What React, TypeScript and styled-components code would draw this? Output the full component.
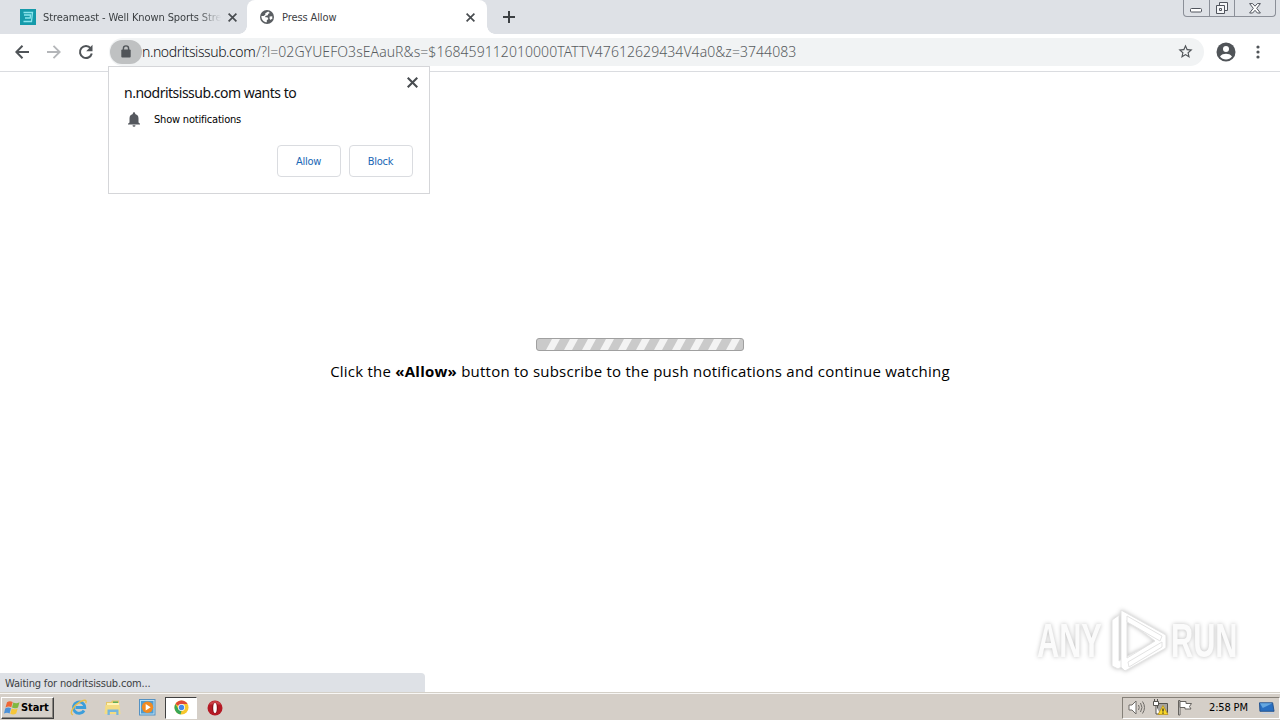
import type { ReactNode } from 'react';
import styled, { createGlobalStyle } from 'styled-components';

const GlobalStyle = createGlobalStyle`
    * {
        box-sizing: border-box;
    }

    body {
        margin: 0;
        overflow: hidden;
        background-color: #ffffff;
        font-family: "DejaVu Sans Condensed", "Noto Sans", sans-serif;
        font-size: 11px;
    }

    svg {
        display: block;
        flex-shrink: 0;
    }
`;

interface ITab {
    title: string;
    active?: boolean;
    spacing: string;
    icon: ReactNode;
}

const CloseIcon = ({ size = 9 }: { size?: number }) => (
    <svg width={size} height={size} viewBox="0 0 9 9" stroke="#484c50" strokeWidth="1.7">
        <path d="M.6 .6 8.4 8.4M8.4 .6 .6 8.4" />
    </svg>
);

const Tab = ({ title, active, spacing, icon }: ITab) => (
    <TabBox $active={active}>
        {icon}
        <TabTitle $active={active} $spacing={spacing}>{title}</TabTitle>
        <CloseIcon />
    </TabBox>
);

const StreamIcon = () => (
    <svg width="16" height="16" viewBox="0 0 16 16">
        <path fill="#159aaa" d="M0 0h16v16H0z" />
        <path d="M3.500 3.500h9l-1 9h-8M4 6h6.500l-.3 3H5" fill="none" stroke="#8be5ed" strokeWidth="1.300" />
    </svg>
);

const GlobeIcon = () => (
    <svg width="16" height="16" viewBox="0 0 16 16">
        <circle cx="8" cy="8" r="7" fill="#5a5e62" />
        <path
            d="M9.200 2.600 6.300 4.200v1.600L4.600 7H2.400c-.2 3.700 2.500 6.200 5.400 6.300v-2l1.600-1.400-1-1.700H6.300V6.900l2.500-.7.5-1.400 1.600-.7z"
            fill="#ffffff"
        />
        <path d="M10.600 7.600l2.700-.3v2l-1.600 1.800-1.100-1.400z" fill="#ffffff" />
    </svg>
);

const WindowControls = () => (
    <Controls>
        <Control $width={25}>
            <svg width="13" height="5"><rect x=".5" y=".5" width="11" height="3.500" rx="1" fill="#fff" stroke="#50545d" /></svg>
        </Control>
        <Control $width={25}>
            <svg width="14" height="14" fill="#f5f6f8" stroke="#50545d">
                <path d="M4.500 1.500h8v8h-8z" />
                <path d="M1.500 4.500h8v8h-8z" />
                <path d="M4.500 7.500h2v2h-2z" />
            </svg>
        </Control>
        <Control $width={41}>
            <svg width="12" height="11" viewBox="0 0 12 11">
                <path d="M.6 .6h3L6 3.200 8.400 .6h3L7.700 5.300l3.700 4.700h-3L6 7.300 3.600 10h-3l3.700-4.700z" fill="#fff" stroke="#50545d" />
            </svg>
        </Control>
    </Controls>
);

const BackIcon = ({ color }: { color: string }) => (
    <svg width="14" height="14" viewBox="0 0 14 14" fill="none" stroke={color} strokeWidth="2">
        <path d="M14 7H1.500M7.500 .8 1.300 7l6.200 6.200" />
    </svg>
);

const ForwardIcon = ({ color }: { color: string }) => (
    <svg width="14" height="14" viewBox="0 0 14 14" fill="none" stroke={color} strokeWidth="1.800">
        <path d="M0 7h12.500M6.500 .8 12.700 7l-6.200 6.200" />
    </svg>
);

const ReloadIcon = () => (
    <svg width="16" height="16" viewBox="0 0 16 16">
        <path d="M12.700 4.300A6 6 0 1 0 13.800 9.500" fill="none" stroke="#505458" strokeWidth="2" />
        <path d="M14.500 .8v6.400H8.200z" fill="#505458" />
    </svg>
);

const Toolbar = () => (
    <ToolbarRow>
        <NavIcons>
            <BackIcon color="#505458" />
            <ForwardIcon color="#b4b6b9" />
            <ReloadIcon />
        </NavIcons>
        <AddressBar>
            <LockChip>
                <svg width="10" height="13" viewBox="0 0 10 13">
                    <path d="M2.400 5V3.500a2.600 2.600 0 0 1 5.200 0V5" fill="none" stroke="#505458" strokeWidth="1.400" />
                    <rect y="4.600" x=".3" width="9.400" height="7.800" rx="1" fill="#505458" />
                </svg>
            </LockChip>
            <Host>n.nodritsissub.com</Host>
            <Query>/?l=02GYUEFO3sEAauR&amp;s=$168459112010000TATTV47612629434V4a0&amp;z=3744083</Query>
            <svg width="17" height="17" viewBox="0 0 24 24" fill="#505458">
                <path d="M22 9.240l-7.190-.62L12 2 9.190 8.630 2 9.240l5.460 4.730L5.820 21 12 17.270 18.180 21l-1.630-7.030zM12 15.400l-3.760 2.270 1-4.280-3.320-2.880 4.380-.38L12 6.100l1.710 4.040 4.380.38-3.320 2.880 1 4.280z" />
            </svg>
        </AddressBar>
        <svg width="20" height="20" viewBox="0 0 20 20">
            <circle cx="10" cy="10" r="9.500" fill="#505458" />
            <circle cx="10" cy="6.900" r="3" fill="#fff" />
            <path d="M4 14.400c1.200-2 4-2.700 6-2.700s4.800.7 6 2.700c-1.400 1.900-3.600 3-6 3s-4.600-1.100-6-3z" fill="#fff" />
        </svg>
        <svg width="4" height="14" fill="#505458">
            <circle cx="2" cy="2" r="1.600" />
            <circle cx="2" cy="7" r="1.600" />
            <circle cx="2" cy="12" r="1.600" />
        </svg>
    </ToolbarRow>
);

const PermissionPrompt = () => (
    <Prompt>
        <PromptHeader>
            <PromptTitle>n.nodritsissub.com wants to</PromptTitle>
            <CloseIcon size={11} />
        </PromptHeader>
        <PromptRow>
            <svg width="14" height="16" viewBox="0 0 14 16" fill="#55585e">
                <path d="M7 1.300a1.200 1.200 0 0 1 1.200 1.200V3c2.200.6 3.300 2.200 3.300 4.400v4l1.500 1.400v.8H1v-.8l1.500-1.400v-4C2.500 5.200 3.600 3.600 5.800 3v-.5A1.200 1.200 0 0 1 7 1.300zM5.500 14.300h3a1.500 1.500 0 0 1-3 0z" />
            </svg>
            <PromptText>Show notifications</PromptText>
        </PromptRow>
        <PromptActions>
            <PromptButton>Allow</PromptButton>
            <PromptButton>Block</PromptButton>
        </PromptActions>
    </Prompt>
);

const Watermark = () => (
    <WatermarkBox>
        <WatermarkText>ANY</WatermarkText>
        <svg width="58" height="64" viewBox="0 0 58 64" fill="#fff" stroke="#e3e3e3" strokeWidth="1" strokeLinejoin="round">
            <path d="M3 11 10 6v46l20-11 3 5L9 60l-6-3z" />
            <path d="M12 1 57 26v13L16 62l-4-4V1zm6 10v38l28-17z" fillRule="evenodd" />
            <path d="M18 7 53 27l-2 5L18 13zM19 53l34-20v5L20 58z" />
        </svg>
        <WatermarkText>RUN</WatermarkText>
    </WatermarkBox>
);

const WindowsLogo = () => (
    <svg width="17" height="16" viewBox="0 0 17 16">
        <path d="M3 2.300c2-1.500 3.800-1.300 5.700-.3L7.300 7.300c-1.700-1-3.700-1-5.800.2z" fill="#ee6635" />
        <path d="M9.300 2.400c1.900 1 4 1 6.200-.2l-1.500 5.200c-2 1.200-4 1.200-6 .2z" fill="#80b840" />
        <path d="M1.200 8.400c2-1.300 4-1.200 5.800-.2l-1.400 5.200c-1.800-1-3.600-1-5.600.2z" fill="#4c91d8" />
        <path d="M7.700 8.600c1.900 1 3.900 1 6-.2l-1.500 5.200c-2 1.200-4 1.200-5.900.2z" fill="#f7c638" />
    </svg>
);

const ExplorerIcon = () => (
    <svg width="18" height="17" viewBox="0 0 18 17" fill="none">
        <path d="M14 11.500A5.700 5.700 0 1 1 14.800 8.500H5.500" stroke="#3c9edb" strokeWidth="2.800" />
        <path d="M3 15.700C-1.500 15 3.500 6.800 9.500 3.200c4.800-3 7.800-2.500 6.200.9" stroke="#e9bf48" strokeWidth="1.400" />
    </svg>
);

const FolderIcon = () => (
    <svg width="18" height="17" viewBox="0 0 18 17">
        <path d="M2 3h5l1-1.500h7V15H2z" fill="#e6c768" />
        <path d="M3 4h12v5H3z" fill="#fff4b5" />
        <path d="M9 2.500h5v1.500H9z" fill="#63ad58" />
        <path d="M1.500 6h14l1 9h-16z" fill="#f4dc82" />
        <path d="M3.500 16v-5.500h11V16h-2.200v-3H5.800v3z" fill="#75b6de" />
    </svg>
);

const PlayerIcon = () => (
    <svg width="17" height="17" viewBox="0 0 17 17">
        <rect x=".5" y=".5" width="15.500" height="15.500" fill="#b9dff5" stroke="#5592c3" />
        <path d="M2 2h12.500v12.500H2z" fill="#4f9bd0" />
        <circle cx="8.500" cy="8.300" r="5.700" fill="#f18a21" />
        <path d="m6.700 5 5 3.300-5 3.300z" fill="#fff" />
    </svg>
);

const ChromeIcon = () => (
    <svg width="15" height="15" viewBox="0 0 16 16">
        <circle cx="8" cy="8" r="7.500" fill="#f7c72d" />
        <path d="M8 8 1.500 4.250A7.500 7.500 0 0 1 14.500 4.250H8z" fill="#df4937" />
        <path d="M1.500 4.250 4.900 10 8 11.500l-1 3.900A7.500 7.500 0 0 1 1.500 4.250z" fill="#38a657" />
        <circle cx="8" cy="8" r="3.700" fill="#fff" />
        <circle cx="8" cy="8" r="2.900" fill="#4589ea" />
    </svg>
);

const OperaIcon = () => (
    <svg width="16" height="16" viewBox="0 0 16 16">
        <circle cx="8" cy="8" r="7.500" fill="#b51924" />
        <path d="M2 4.500C4-.3 12-.3 14 4.500z" fill="#d65a5e" opacity=".6" />
        <ellipse cx="8" cy="8" rx="2.900" ry="5.200" fill="#811018" />
        <ellipse cx="8" cy="8" rx="1.800" ry="5" fill="#fff" />
    </svg>
);

const SystemTray = () => (
    <Tray>
        <svg width="18" height="17" viewBox="0 0 18 17" stroke="#6e6b67" fill="none">
            <path d="M1 6h3l4-4v13l-4-4H1z" fill="#fff" />
            <path d="M10.500 6q1.500 2.500 0 5M12.500 4q3 4.500 0 9M14.500 2.500q4 6 0 12" />
        </svg>
        <svg width="18" height="17" viewBox="0 0 18 17">
            <path d="M5.500 4.500h10v9h-10z" fill="#a6a49f" stroke="#55534e" />
            <path d="M1.500 2.500h5v4h-5zM2.500 0v3M5.500 0v3M4 6.500V15h4" fill="#fff" stroke="#55534e" />
            <path d="m11 6.500 5 9H6z" fill="#f8d729" stroke="#b88c12" strokeWidth=".7" />
            <path d="M11 9.500v3M11 13.500v1.200" stroke="#222" strokeWidth="1.200" />
        </svg>
        <svg width="18" height="17" viewBox="0 0 18 17" fill="#fff" stroke="#66635f">
            <path d="M2.500 1.500h1.500V16H2.500z" />
            <path d="M4 2.500h6v2h5.500l-2 3 1.500 2.500H9V8.500H4z" />
        </svg>
        <Clock>2:58 PM</Clock>
        <svg width="16" height="14" viewBox="0 0 17 14">
            <path d="M.5 1.500h14l1.500 9H1z" fill="#296fc1" stroke="#22518d" />
            <path d="M1 2h13l-10 5z" fill="#65a7e0" />
            <path d="M2 12h14v1.500H4z" fill="#c1cfe2" />
        </svg>
    </Tray>
);

const App = () => (
    <>
        <GlobalStyle />
        <Screen>
            <TabStrip>
                <Tab title="Streameast - Well Known Sports Stre" spacing="-0.1px" icon={<StreamIcon />} />
                <Tab title="Press Allow" active spacing="-0.1px" icon={<GlobeIcon />} />
                <NewTab>
                    <svg width="12" height="12" stroke="#3c4043" strokeWidth="2"><path d="M6 0v12M0 6h12" /></svg>
                </NewTab>
                <WindowControls />
            </TabStrip>
            <Toolbar />
            <Page>
                <Progress>
                    <svg width="206" height="11">
                        {Array.from({ length: 11 }, (_, i) => (
                            <path key={i} d={`M${9 + i * 18} 11l6-11h8l-6 11z`} fill="#f3f3f3" />
                        ))}
                    </svg>
                </Progress>
                <Message>
                    Click the <b>«Allow»</b> button to subscribe to the push notifications and continue watching
                </Message>
                <PermissionPrompt />
                <Watermark />
                <Status>Waiting for nodritsissub.com...</Status>
            </Page>
            <Taskbar>
                <StartButton>
                    <WindowsLogo />
                    Start
                </StartButton>
                <QuickLaunch>
                    <TaskItem><ExplorerIcon /></TaskItem>
                    <TaskItem><FolderIcon /></TaskItem>
                    <TaskItem><PlayerIcon /></TaskItem>
                    <TaskItem $pressed><ChromeIcon /></TaskItem>
                    <TaskItem><OperaIcon /></TaskItem>
                </QuickLaunch>
                <SystemTray />
            </Taskbar>
        </Screen>
    </>
);

const Screen = styled.div`
    width: 1280px;
    height: 720px;
    overflow: hidden;

    display: flex;
    flex-direction: column;
`;

const TabStrip = styled.div`
    height: 34px;
    padding-left: 7px;
    background-color: #dee1e6;

    display: flex;
    flex-shrink: 0;
`;

const TabBox = styled.div<{ $active?: boolean }>`
    position: relative;
    width: 240px;
    height: 34px;
    padding: ${({ $active }) => ($active ? '0 12px' : '0 11px 0 13px')};
    border-radius: 8px 8px 0 0;
    background-color: ${({ $active }) => ($active ? '#ffffff' : 'transparent')};

    display: flex;
    align-items: center;
    gap: 7px;

    &::before,
    &::after {
        content: '';
        display: ${({ $active }) => ($active ? 'block' : 'none')};
        position: absolute;
        bottom: 0;
        width: 8px;
        height: 8px;
    }

    &::before {
        left: -8px;
        background: radial-gradient(circle at 0 0, #dee1e6 7.5px, #ffffff 8px);
    }

    &::after {
        right: -8px;
        background: radial-gradient(circle at 100% 0, #dee1e6 7.5px, #ffffff 8px);
    }
`;

const TabTitle = styled.span<{ $active?: boolean; $spacing: string }>`
    flex: 1;
    white-space: nowrap;
    color: #3c4043;
    letter-spacing: ${({ $spacing }) => $spacing};
    mask-image: ${({ $active }) => ($active ? 'none' : 'linear-gradient(90deg, #000 155px, transparent 178px)')};
`;

const NewTab = styled.div`
    width: 44px;
    padding-top: 11px;

    display: flex;
    justify-content: center;
`;

const Controls = styled.div`
    height: 17px;
    margin-left: auto;
    margin-right: 4px;
    border: 1px solid #8b8f98;
    border-top: none;
    border-radius: 0 0 4px 4px;

    display: flex;
`;

const Control = styled.div<{ $width: number }>`
    width: ${({ $width }) => $width}px;

    display: flex;
    justify-content: center;
    align-items: center;

    & + & {
        border-left: 1px solid #8b8f98;
    }

    &:first-child {
        align-items: flex-end;
        padding-bottom: 3px;
    }
`;

const ToolbarRow = styled.div`
    height: 38px;
    padding: 0 20px 2px 15px;
    border-bottom: 1px solid #dadce0;

    display: flex;
    align-items: center;
    flex-shrink: 0;

    & > svg:last-child {
        margin-left: 20px;
    }
`;

const NavIcons = styled.div`
    width: 94px;

    display: flex;
    align-items: center;
    gap: 17.5px;
`;

const AddressBar = styled.div`
    width: 1095px;
    height: 28px;
    padding: 0 10px 0 1px;
    margin-right: 12px;
    border-radius: 14px;
    background-color: #f1f3f4;
    font-family: "Noto Sans", sans-serif;
    font-size: 14px;
    font-weight: 300;

    display: flex;
    align-items: center;
`;

const LockChip = styled.div`
    width: 32px;
    height: 24px;
    border-radius: 12px;
    background-color: #bfc1c2;

    display: flex;
    justify-content: center;
    align-items: center;
`;

const Host = styled.span`
    width: 114px;
    white-space: nowrap;
    color: #101114;
    letter-spacing: -0.42px;
`;

const Query = styled.span`
    flex: 1;
    white-space: nowrap;
    color: #585c60;
    letter-spacing: 0.06px;
`;

const Page = styled.main`
    position: relative;
    height: 620px;
    padding-top: 266px;

    display: flex;
    flex-direction: column;
    align-items: center;
`;

const Progress = styled.div`
    width: 208px;
    height: 13px;
    border: 1px solid #a0a0a0;
    border-radius: 3px;
    background-color: #cacaca;
    overflow: hidden;
`;

const Message = styled.p`
    margin: 8px 0 0;
    white-space: nowrap;
    color: #000000;
    font-family: "Open Sans", sans-serif;
    font-size: 15px;
    line-height: 24px;
    letter-spacing: 0.23px;
`;

const Prompt = styled.div`
    position: absolute;
    left: 108px;
    top: -6px;
    width: 322px;
    height: 128px;
    padding: 10px 16px 16px 15px;
    border: 1px solid #d5d6d9;
    background-color: #ffffff;

    display: flex;
    flex-direction: column;
`;

const PromptHeader = styled.div`
    height: 33px;

    display: flex;
    justify-content: space-between;

    & > svg {
        margin-right: -5px;
    }
`;

const PromptTitle = styled.div`
    padding-top: 6px;
    color: #101114;
    font-family: "Noto Sans", sans-serif;
    font-size: 14px;
    line-height: 20px;
    letter-spacing: -0.5px;
`;

const PromptRow = styled.div`
    height: 18px;
    padding-left: 3px;

    display: flex;
    align-items: center;
    gap: 13px;
`;

const PromptText = styled.span`
    color: #000000;
    letter-spacing: -0.2px;
`;

const PromptActions = styled.div`
    margin-top: auto;

    display: flex;
    justify-content: flex-end;
    gap: 8px;
`;

const PromptButton = styled.button`
    width: 64px;
    height: 32px;
    padding: 0 1px 0 0;
    border: 1px solid #dadce0;
    border-radius: 4px;
    background-color: #ffffff;
    color: #1967b5;
    font-family: inherit;
    font-size: 11px;
    letter-spacing: -0.3px;
`;

const WatermarkBox = styled.div`
    position: absolute;
    left: 1037px;
    top: 537px;
    filter: drop-shadow(0 0 2px rgba(0, 0, 0, 0.25));

    display: flex;
    align-items: center;
    gap: 4px;
`;

const WatermarkText = styled.span`
    width: 68px;
    color: #fbfbfb;
    font-family: "Liberation Sans", sans-serif;
    font-size: 48px;
    font-weight: bold;
    line-height: 60px;
    white-space: nowrap;
    transform: scaleX(0.64);
    transform-origin: 0 50%;
`;

const Status = styled.div`
    position: absolute;
    left: 0;
    bottom: 0;
    width: 425px;
    height: 19px;
    padding-left: 5px;
    border-radius: 0 4px 0 0;
    background-color: #dee1e6;
    color: #3c4043;
    line-height: 21px;
    letter-spacing: -0.17px;
`;

const Taskbar = styled.div`
    height: 28px;
    padding: 3px 0 1px 1px;
    border-top: 1px solid #d4d0c8;
    background-color: #d5cfc8;
    box-shadow: inset 0 1px 0 #f8f7f5;

    display: flex;
    align-items: center;
`;

const StartButton = styled.button`
    width: 53px;
    height: 22px;
    padding: 0 0 0 2px;
    border: 1px solid;
    border-color: #ffffff #404040 #404040 #ffffff;
    box-shadow: inset -1px -1px 0 #8a8680;
    background-color: #d5cfc8;
    color: #000000;
    font-family: "DejaVu Sans Condensed", sans-serif;
    font-size: 11px;
    font-weight: bold;
    letter-spacing: -0.1px;

    display: flex;
    align-items: center;
`;

const QuickLaunch = styled.div`
    margin-left: 9px;

    display: flex;
    gap: 2px;
`;

const TaskItem = styled.div<{ $pressed?: boolean }>`
    width: 32px;
    height: 22px;
    border: 1px solid;
    border-color: ${({ $pressed }) => ($pressed ? '#404040 #ffffff #ffffff #404040' : 'transparent')};
    background-color: ${({ $pressed }) => ($pressed ? '#ffffff' : 'transparent')};

    display: flex;
    justify-content: center;
    align-items: center;
`;

const Tray = styled.div`
    width: 158px;
    height: 22px;
    margin-left: auto;
    padding-left: 5px;
    border: 1px solid;
    border-color: #858078 #ffffff #ffffff #858078;

    display: flex;
    align-items: center;
    gap: 6px;
`;

const Clock = styled.span`
    width: 43px;
    margin: 0 1px 0 9px;
    white-space: nowrap;
    color: #000000;
    letter-spacing: -0.15px;
`;

export default App;
